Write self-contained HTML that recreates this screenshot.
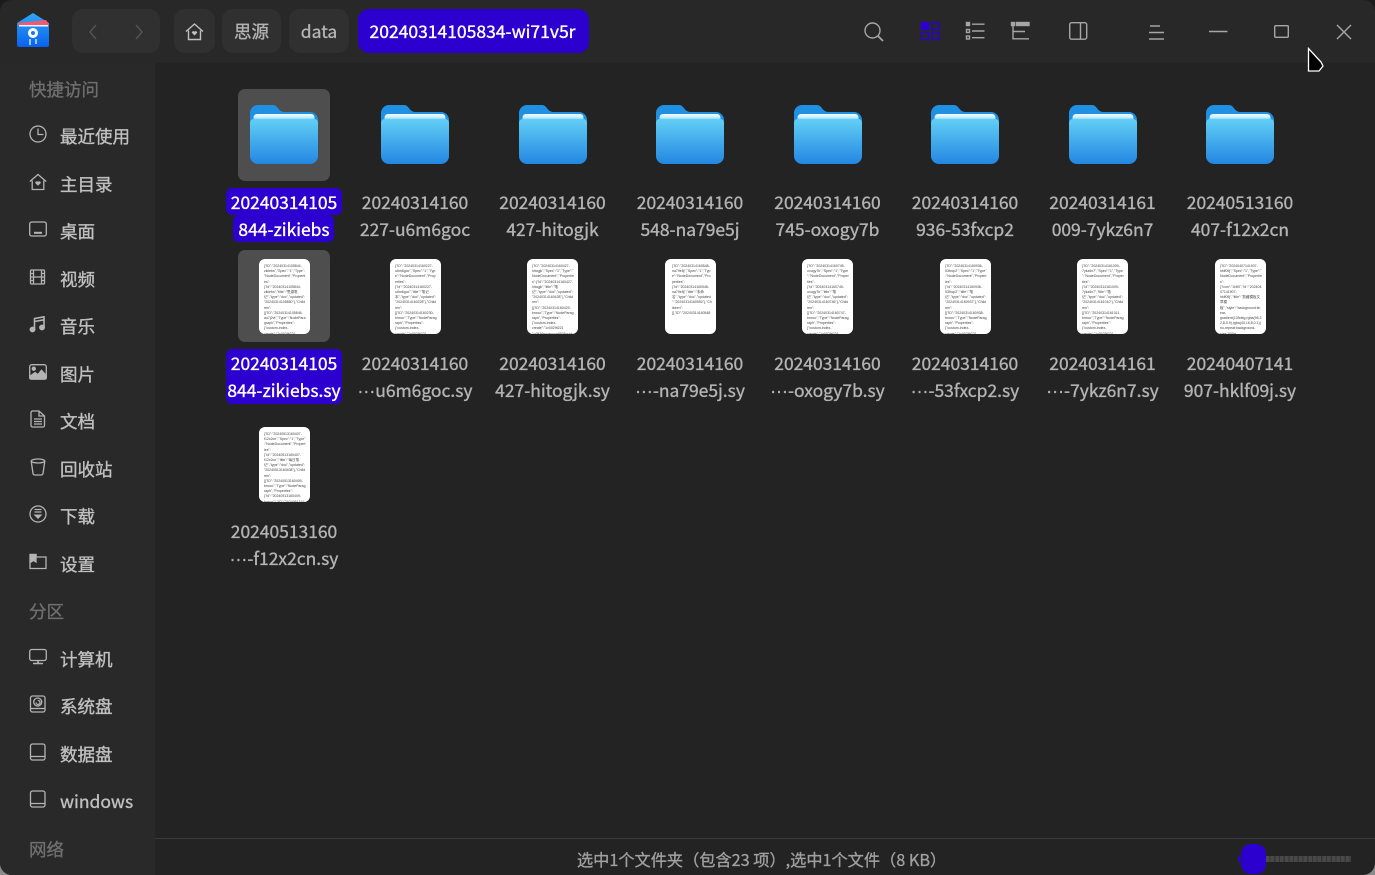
<!DOCTYPE html>
<html><head><meta charset="utf-8"><style>
*{box-sizing:border-box;margin:0;padding:0}
html,body{width:1375px;height:875px;overflow:hidden;background:linear-gradient(#1c1c1c 0 50%,#8a8a8a 50%)}
body{position:relative;font-family:"Noto Sans CJK SC","Liberation Sans",sans-serif}
#win{position:absolute;inset:0;background:#232323;border-radius:12px;overflow:hidden}
.a{position:absolute}
#title{left:0;top:0;width:1375px;height:63px;background:#282828}
#side{left:0;top:63px;width:155px;height:812px;background:#292929}
#foot{left:155px;top:838px;width:1220px;height:1px;background:#3a3a3a}
.btn{position:absolute;top:9px;height:44px;background:#303030;border-radius:11px;color:#b4b4b4;font-size:17.5px;line-height:45px;text-align:center;-webkit-text-stroke:.35px currentColor}
.btn.cur{background:#2c00cf;color:#fff}
.h{position:absolute;left:29px;font-size:17.5px;line-height:26px;color:#6f6f6f;-webkit-text-stroke:.35px currentColor}
.s{position:absolute;left:60px;font-size:17.5px;line-height:26px;color:#c0c0c0;-webkit-text-stroke:.35px currentColor}
.l{position:absolute;width:136px;text-align:center;font-size:17.45px;line-height:27px;color:#b4b4b4;white-space:nowrap;-webkit-text-stroke:.35px currentColor}
.d{font-family:"Liberation Sans",sans-serif;letter-spacing:.1px}
.hl{position:absolute;background:#2c00cf;border-radius:6px}
.w{color:#fff}
.sel{position:absolute;left:238px;width:92px;height:92px;background:#4e4e4e;border-radius:7px}
.t{position:absolute;width:51px;height:75px;background:#fff;border-radius:6px;overflow:hidden;padding:5px 4px 0 5px;font:3.5px/5.2px "Liberation Sans",sans-serif;color:#444;overflow-wrap:anywhere}
svg.i{position:absolute;left:29px;width:18px;height:18px;fill:none;stroke:#b4b4b4;stroke-width:1.3}
svg.f{position:absolute;top:104px;width:70px;height:61px}
svg.b{position:absolute;overflow:visible;fill:none;stroke:#a6a6a6;stroke-width:1.4}
</style></head><body>
<div id="win">
<div class="a" id="title"></div>
<div class="a" id="side"></div>
<div class="a" id="foot"></div>

<svg class="a" style="left:16px;top:12px" width="35" height="36" viewBox="0 0 35 36">
<defs><linearGradient id="lg" x1="0" y1="0" x2="0" y2="1"><stop offset="0" stop-color="#2fa8f5"/><stop offset="1" stop-color="#0a60f0"/></linearGradient></defs>
<path d="M1 11 17 1 33 11V33a2 2 0 0 1-2 2H3a2 2 0 0 1-2-2Z" fill="url(#lg)"/>
<path d="M2 11 30 8 33 12V13H2Z" fill="#ef5a72"/><path d="M3 13H32V14.5H3Z" fill="#e8f4fb"/>
<circle cx="17" cy="21" r="5" fill="#fff"/><circle cx="17" cy="21" r="2" fill="#1a78ef"/>
<path d="M14 27V33M20 27V32" stroke="#dff" stroke-width="1.3"/>
</svg>

<div class="btn" style="left:72px;width:88px"></div>
<svg class="b" style="left:88px;top:24px;stroke:#555" width="10" height="16"><path d="M8 1 2 8l6 7"/></svg>
<svg class="b" style="left:134px;top:24px;stroke:#555" width="10" height="16"><path d="M2 1l6 7-6 7"/></svg>
<div class="btn" style="left:174px;width:41px"></div>
<svg class="b" style="left:185px;top:23px;stroke:#c0c0c0" width="19" height="18"><path d="M1 8.5 9.5 1 18 8.5M3.5 7.5V16.5H15.5V7.5"/><path d="M9.5 12.5 6.8 9.8a1.6 1.6 0 0 1 2.7-1.2 1.6 1.6 0 0 1 2.7 1.2Z" fill="#c0c0c0" stroke="none"/></svg>
<div class="btn" style="left:222px;width:59px">思源</div>
<div class="btn" style="left:289px;width:60px">data</div>
<div class="btn cur" style="left:358px;width:231px;padding-right:2px">20240314105834-wi71v5r</div>

<svg class="b" style="left:863px;top:21px" width="22" height="22"><circle cx="9.5" cy="9.5" r="7.5"/><path d="M15 15l5 5" stroke-width="1.8"/></svg>
<svg class="b" style="left:921px;top:22px;stroke:#2c00cf" width="19" height="18"><rect x=".5" y=".5" width="7" height="7" fill="#2c00cf"/><rect x="11" y=".5" width="7" height="7"/><rect x=".5" y="10.5" width="7" height="7"/><rect x="11" y="10.5" width="7" height="7"/></svg>
<svg class="b" style="left:966px;top:22px" width="19" height="18"><rect x=".5" y=".5" width="3" height="3" fill="#a6a6a6"/><rect x=".5" y="7.5" width="3" height="3"/><rect x=".5" y="14" width="3" height="3"/><path d="M6 2.2H18.5M6 9H18.5M6 15.7H18.5"/></svg>
<svg class="b" style="left:1011px;top:22px" width="19" height="18"><rect x=".5" y=".5" width="3" height="3" fill="#a6a6a6"/><rect x="5.5" y=".5" width="12.5" height="3" fill="#a6a6a6"/><path d="M2 4V16.8H18M2 9.5H14"/></svg>
<svg class="b" style="left:1069px;top:22px" width="19" height="18"><rect x=".7" y=".7" width="17" height="16.5" rx="2"/><path d="M11.5 1V17"/></svg>
<svg class="b" style="left:1149px;top:25px" width="16" height="15"><path d="M1 1H11M0 7.5H15M0 14H15"/></svg>
<svg class="b" style="left:1209px;top:30px" width="19" height="3"><path d="M0 1.5H18.5"/></svg>
<svg class="b" style="left:1274px;top:25px" width="15" height="13"><rect x=".7" y=".7" width="13.6" height="11.6" rx="1"/></svg>
<svg class="b" style="left:1336px;top:24px" width="16" height="16"><path d="M1 1l14 14M15 1 1 15"/></svg>

<div class="h" style="top:77px">快捷访问</div>
<div class="s" style="top:124px">最近使用</div>
<div class="s" style="top:172px">主目录</div>
<div class="s" style="top:219px">桌面</div>
<div class="s" style="top:267px">视频</div>
<div class="s" style="top:314px">音乐</div>
<div class="s" style="top:362px">图片</div>
<div class="s" style="top:409px">文档</div>
<div class="s" style="top:457px">回收站</div>
<div class="s" style="top:504px">下载</div>
<div class="s" style="top:552px">设置</div>
<div class="h" style="top:599px">分区</div>
<div class="s" style="top:647px">计算机</div>
<div class="s" style="top:694px">系统盘</div>
<div class="s" style="top:742px">数据盘</div>
<div class="s" style="top:789px">windows</div>
<div class="h" style="top:837px">网络</div>

<svg class="i" style="top:125px" viewBox="0 0 18 18"><circle cx="9" cy="9" r="8"/><path d="M9 3.5V9.5H14.5"/></svg>
<svg class="i" style="top:173px" viewBox="0 0 18 18"><path d="M.8 8.5 9 1.5 17.2 8.5M3.2 7.5V16.5H14.8V7.5"/><path d="M9 12.8 6.2 10a1.6 1.6 0 0 1 2.8-1.2A1.6 1.6 0 0 1 11.8 10Z" fill="#b4b4b4" stroke="none"/></svg>
<svg class="i" style="top:221px" viewBox="0 0 18 18"><rect x=".7" y="1" width="16.6" height="14" rx="2"/><path d="M5 11.800H13" stroke-width="2"/></svg>
<svg class="i" style="top:269px" viewBox="0 0 18 18"><rect x="1.500" y="1" width="14" height="14" rx="1"/><path d="M4.500 1V15M12.500 1V15M1.500 4.500H4.500M1.500 8H4.500M1.500 11.500H4.500M12.500 4.500H15.500M12.500 8H15.500M12.500 11.500H15.500M4.500 8H12.500"/></svg>
<svg class="i" style="top:316px" viewBox="0 0 18 18"><path d="M5.500 13.500V2.500L15 .8V11.500M5.500 5.500 15 3.800" stroke-width="1.600"/><ellipse cx="3.500" cy="13.500" rx="2.300" ry="2.200" fill="#b4b4b4"/><ellipse cx="13" cy="11.500" rx="2.300" ry="2.200" fill="#b4b4b4"/></svg>
<svg class="i" style="top:364px" viewBox="0 0 18 18"><rect x=".7" y=".7" width="16.600" height="14.500" rx="2"/><circle cx="4.800" cy="4.700" r="1.500" fill="#b4b4b4"/><path d="M1 14.700V12.200L6 8.700 9 10.700 12.500 6.200 17 11.200V14.700Z" fill="#b4b4b4"/></svg>
<svg class="i" style="top:410px" viewBox="0 0 18 18"><path d="M2 2.500A1.500 1.500 0 0 1 3.500 1H10L15.500 6V15.500A1.500 1.500 0 0 1 14 17H3.500A1.500 1.500 0 0 1 2 15.500ZM10 1V6H15.500"/><path d="M5 9H13M5 11.500H13M5 14H13"/></svg>
<svg class="i" style="top:458px" viewBox="0 0 18 18"><ellipse cx="9" cy="3" rx="6.800" ry="2"/><path d="M2.200 3 4 15.500A2 2 0 0 0 6 17H12A2 2 0 0 0 14 15.500L15.800 3"/></svg>
<svg class="i" style="top:505px" viewBox="0 0 18 18"><circle cx="9" cy="9" r="8"/><path d="M5.500 4.500H12.500M5.500 7H12.500"/><path d="M4.500 9.500H13.500L9 14Z" fill="#b4b4b4" stroke="none"/></svg>
<svg class="i" style="top:553px" viewBox="0 0 18 18"><path d="M1 1.500H7V4H17V15.500H1Z"/><path d="M1.500 1.500H7V9L4.500 7.500 2 9Z" fill="#b4b4b4"/></svg>
<svg class="i" style="top:648px" viewBox="0 0 18 18"><rect x=".7" y="1.500" width="16.600" height="11" rx="2"/><path d="M9 12.500V15M4 15.500H14" stroke-width="1.600"/></svg>
<svg class="i" style="top:695px" viewBox="0 0 18 18"><rect x="1.500" y="1" width="14.500" height="16" rx="2"/><path d="M1.500 13.500H16"/><circle cx="8.700" cy="7" r="4"/><path d="M8.700 5.500A2 2 0 1 1 7 7.500" /></svg>
<svg class="i" style="top:743px" viewBox="0 0 18 18"><rect x="1.500" y="1" width="14.500" height="16" rx="2"/><path d="M1.500 13.500H16"/></svg>
<svg class="i" style="top:790px" viewBox="0 0 18 18"><rect x="1.500" y="1" width="14.500" height="16" rx="2"/><path d="M1.500 13.500H16"/></svg>

<div class="sel" style="top:89px"></div>
<div class="sel" style="top:250px"></div>

<svg width="0" height="0" style="position:absolute"><defs>
<linearGradient id="fb" x1="0" y1="0" x2="0" y2="1"><stop offset="0" stop-color="#62cff6"/><stop offset="1" stop-color="#2387e1"/></linearGradient>
<linearGradient id="wb2" x1="0" y1="0" x2="0" y2="1"><stop offset="0" stop-color="#f5fcff"/><stop offset=".6" stop-color="#c8eefb"/><stop offset="1" stop-color="#7fd6f7"/></linearGradient>
<symbol id="folder" viewBox="0 0 70 61">
<path d="M1 9A8 8 0 0 1 9 1H24C29 1 29 7.500 35 8H61A8 8 0 0 1 69 16V30H1Z" fill="#1f90e2"/>
<path d="M4.500 15.500V13.500A3.500 3.500 0 0 1 8 10H62A3.500 3.500 0 0 1 65.500 13.500V15.500Z" fill="url(#wb2)"/>
<path d="M1 19C1 16.500 2.500 15 5 15H65C67.500 15 69 16.500 69 19V52A8 8 0 0 1 61 60H9A8 8 0 0 1 1 52Z" fill="url(#fb)"/>
</symbol></defs></svg>
<svg class="f" style="left:249px"><use href="#folder"/></svg>
<svg class="f" style="left:380px"><use href="#folder"/></svg>
<svg class="f" style="left:518px"><use href="#folder"/></svg>
<svg class="f" style="left:655px"><use href="#folder"/></svg>
<svg class="f" style="left:793px"><use href="#folder"/></svg>
<svg class="f" style="left:930px"><use href="#folder"/></svg>
<svg class="f" style="left:1068px"><use href="#folder"/></svg>
<svg class="f" style="left:1205px"><use href="#folder"/></svg>

<div class="hl" style="left:226px;top:188px;width:116px;height:27px"></div>
<div class="hl" style="left:233px;top:215px;width:101px;height:27px"></div>
<div class="hl" style="left:226px;top:349px;width:116px;height:55px"></div>

<div class="l w" style="left:216px;top:188.500px">20240314105<br>844-zikiebs</div>
<div class="l" style="left:347px;top:188.500px">20240314160<br>227-u6m6goc</div>
<div class="l" style="left:484.500px;top:188.500px">20240314160<br>427-hitogjk</div>
<div class="l" style="left:622px;top:188.500px">20240314160<br>548-na79e5j</div>
<div class="l" style="left:759.500px;top:188.500px">20240314160<br>745-oxogy7b</div>
<div class="l" style="left:897px;top:188.500px">20240314160<br>936-53fxcp2</div>
<div class="l" style="left:1034.500px;top:188.500px">20240314161<br>009-7ykz6n7</div>
<div class="l" style="left:1172px;top:188.500px">20240513160<br>407-f12x2cn</div>

<div class="l w" style="left:216px;top:350.300px">20240314105<br>844-zikiebs.sy</div>
<div class="l" style="left:347px;top:350.300px">20240314160<br><span class="d">···</span>u6m6goc.sy</div>
<div class="l" style="left:484.500px;top:350.300px">20240314160<br>427-hitogjk.sy</div>
<div class="l" style="left:622px;top:350.300px">20240314160<br><span class="d">···</span>-na79e5j.sy</div>
<div class="l" style="left:759.500px;top:350.300px">20240314160<br><span class="d">···</span>-oxogy7b.sy</div>
<div class="l" style="left:897px;top:350.300px">20240314160<br><span class="d">···</span>-53fxcp2.sy</div>
<div class="l" style="left:1034.500px;top:350.300px">20240314161<br><span class="d">···</span>-7ykz6n7.sy</div>
<div class="l" style="left:1172px;top:350.300px">20240407141<br>907-hklf09j.sy</div>
<div class="l" style="left:216px;top:518px">20240513160<br><span class="d">···</span>-f12x2cn.sy</div>

<div class="t" style="left:259px;top:259px">{"ID":"20240314105844-zikiebs","Spec":"1","Type":"NodeDocument","Properties":{"id":"20240314105844-zikiebs","title":"思源笔记","type":"doc","updated":"20240314105850"},"Children":[{"ID":"20240314105846-ao7j2vt","Type":"NodeParagraph","Properties":{"custom-index-create":"1v0029t221 1v0lt36pccsvcua9536quot.0cs, 1v0l26pccs2dqd4Fna9536quot.</div>
<div class="t" style="left:390px;top:259px">{"ID":"20240314160227-u6m6goc","Spec":"1","Type":"NodeDocument","Properties":{"id":"20240314160227-u6m6goc","title":"笔记本","type":"doc","updated":"20240314160228"},"Children":[{"ID":"20240314160230-bnxco","Type":"NodeParagraph","Properties":{"custom-index-create":"1v0029t221 1v0lt36pccsvcua9536quot.0cs, 1v0l26pccs2dqd4Fna9536quot.</div>
<div class="t" style="left:527px;top:259px">{"ID":"20240314160427-hitogjk","Spec":"1","Type":"NodeDocument","Properties":{"id":"20240314160427-hitogjk","title":"笔记","type":"doc","updated":"20240314160428"},"Children":[{"ID":"20240314160429-bnxco","Type":"NodeParagraph","Properties":{"custom-index-create":"1v0029t221 1v0lt36pccsvcua9536quot.0cs, 1v0l26pccs2dqd4Fna9536quot.</div>
<div class="t" style="left:665px;top:259px;padding-left:7px">{"ID":"20240314160548-na79e5j","Spec":"1","Type":"NodeDocument","Properties":{"id":"20240314160548-na79e5j","title":"未命名","type":"doc","updated":"20240314160550"},"Children":[],"ID":"20240314160548</div>
<div class="t" style="left:802px;top:259px">{"ID":"20240314160745-oxogy7b","Spec":"1","Type":"NodeDocument","Properties":{"id":"20240314160745-oxogy7b","title":"笔记","type":"doc","updated":"20240314160746"},"Children":[{"ID":"20240314160747-bnxco","Type":"NodeParagraph","Properties":{"custom-index-create":"1v0029t221 1v0lt36pccsvcua9536quot.0cs, 1v0l26pccs2dqd4Fna9536quot.</div>
<div class="t" style="left:940px;top:259px">{"ID":"20240314160936-53fxcp2","Spec":"1","Type":"NodeDocument","Properties":{"id":"20240314160936-53fxcp2","title":"笔记","type":"doc","updated":"20240314160937"},"Children":[{"ID":"20240314160938-bnxco","Type":"NodeParagraph","Properties":{"custom-index-create":"1v0029t221 1v0lt36pccsvcua9536quot.0cs, 1v0l26pccs2dqd4Fna9536quot.</div>
<div class="t" style="left:1077px;top:259px">{"ID":"20240314161009-7ykz6n7","Spec":"1","Type":"NodeDocument","Properties":{"id":"20240314161009-7ykz6n7","title":"笔记","type":"doc","updated":"20240314161010"},"Children":[{"ID":"20240314161011-bnxco","Type":"NodeParagraph","Properties":{"custom-index-create":"1v0029t221 1v0lt36pccsvcua9536quot.0cs, 1v0l26pccs2dqd4Fna9536quot.</div>
<div class="t" style="left:1215px;top:259px">{"ID":"20240407141907-hklf09j","Spec":"1","Type":"NodeDocument","Properties":{"icon":"1f4f0","id":"20240407141907-hklf09j","title":"剪藏模板文章模板","style":"background:linear-gradient(135deg,rgba(96,32,8,0.9),rgba(40,16,8,0.1)) no-repeat;background-size:100% 100%;"},"type":"doc","updated":"</div>
<div class="t" style="left:259px;top:427px">{"ID":"20240513160407-f12x2cn","Spec":"1","Type":"NodeDocument","Properties":{"id":"20240513160407-f12x2cn","title":"每日笔记","type":"doc","updated":"20240513160408"},"Children":[{"ID":"20240513160409-bnxco","Type":"NodeParagraph","Properties":{"id":"20240513160409-bnxco"},"ID":"20240513160410-abc","Type":"NodeParagraph","Properties":{"</div>

<div class="a" style="left:577px;top:847px;font-size:16.2px;line-height:24px;color:#a0a0a0;white-space:nowrap;-webkit-text-stroke:.3px currentColor">选中1个文件夹（包含23 项）,选中1个文件（8 KB）</div>

<div class="a" style="left:1238px;top:856px;width:2px;height:6px;background:#2c00cf"></div>
<div class="a" style="left:1241px;top:844px;width:25px;height:30px;background:#2c00cf;border-radius:10px"></div>
<div class="a" style="left:1266px;top:856px;width:85px;height:6px;background:repeating-linear-gradient(90deg,#484848 0 3.5px,#363636 3.5px 4.7px)"></div>
</div>

<svg class="a" style="left:1307px;top:47px" width="18" height="26"><path d="M1.500 1.500V24H12L16 19 14 15Z" fill="#000" stroke="#fff" stroke-width="1.300"/></svg>
</body></html>
